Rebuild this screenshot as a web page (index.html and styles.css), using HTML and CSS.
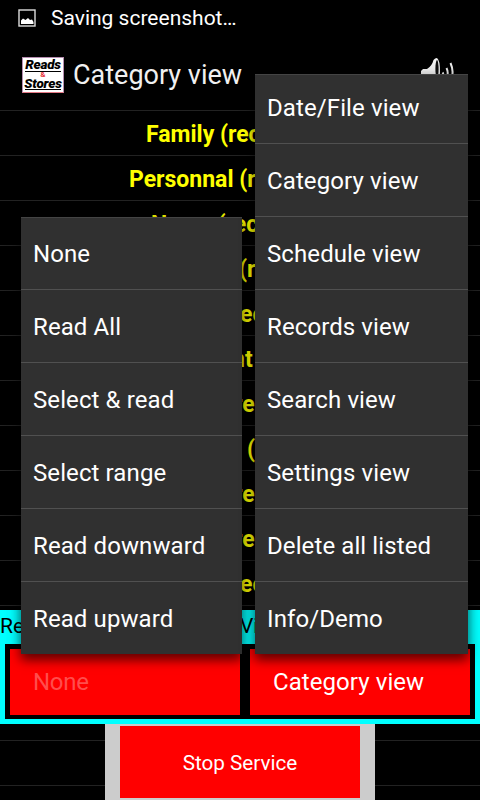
FILE: index.html
```
<!DOCTYPE html>
<html lang="en">
<head>
<meta charset="utf-8">
<title>Category view</title>
<link rel="stylesheet" href="styles.css">
</head>
<body>
<div class="screen">
  <div class="status">
    <svg class="status-icon" width="18" height="18" viewBox="0 0 18 18"><rect x="1" y="1" width="16" height="16" fill="none" stroke="#ddd" stroke-width="1.4"/><path d="M3 15V11.500L5 9.500L7.500 11L10 9L12 11L14 10.500L15.500 13V15Z" fill="#fff"/></svg>
    <span>Saving screenshot…</span>
  </div>
  <header class="bar">
    <div class="logo"><span class="word">Reads</span><span class="amp">&amp;</span><span class="word low">Stores</span></div>
    <h1>Category view</h1>
    <svg class="speaker" width="36" height="32" viewBox="0 0 36 32"><path d="M1 18V14L3 12H7Q12 9 13.500 3Q15 1 17 1Q20 3 20 15Q20 26 16 27L8 20H2Z" fill="#f4f4f4"/><ellipse cx="17" cy="12" rx="1.600" ry="9" fill="#111"/><path d="M22.500 15.500Q24 17 22.500 20M26.500 11Q29 16 26.500 22M30.500 6Q34.500 15 31 25" fill="none" stroke="#eee" stroke-width="2"/></svg>
  </header>
  <ul class="list">
    <li class="r1">Family (rec</li>
    <li class="r2">Personnal (r</li>
    <li class="r3">Name (rec</li>
    <li class="r4">(r</li>
    <li class="r5">ec</li>
    <li class="r6">nt</li>
    <li class="r7">re</li>
    <li class="r8">(</li>
    <li class="r9">re</li>
    <li class="r10">re</li>
    <li class="r11">ec</li>
  </ul>
  <section class="controls">
    <div class="labels"><span>Re</span><span>Vi</span></div>
    <div class="spinners">
      <div class="spinner dim">None</div>
      <div class="spinner">Category view</div>
    </div>
  </section>
  <footer class="foot"><div class="frame"><button class="stop">Stop Service</button></div></footer>
  <ul class="menu left">
    <li>None</li><li>Read All</li><li>Select &amp; read</li><li>Select range</li><li>Read downward</li><li>Read upward</li>
  </ul>
  <ul class="menu right">
    <li>Date/File view</li><li>Category view</li><li>Schedule view</li><li>Records view</li><li>Search view</li><li>Settings view</li><li>Delete all listed</li><li>Info/Demo</li>
  </ul>
</div>
</body>
</html>
```
FILE: styles.css
```
* { box-sizing: border-box; }
body { margin: 0; background: #000; font-family: Roboto, sans-serif; }
ul { list-style: none; margin: 0; padding: 0; }
.screen { position: relative; width: 480px; height: 800px; overflow: hidden; background: #000; }
.status { height: 38px; padding: 0 0 2px 18px; display: flex; align-items: center; gap: 15px; color: #fff; font-size: 21px; }
.bar { height: 72px; display: flex; align-items: center; padding: 1px 24px 0 22px; }
.logo { width: 42px; height: 36px; background: #fff; border: 1px solid #b58cb0; border-bottom-color: #e57884; color: #000; display: flex; flex-direction: column; align-items: center; font-size: 13.5px; line-height: 13px; overflow: hidden; }
.word { font-weight: 900; font-style: italic; width: 36px; height: 14px; border-bottom: 1px solid #000; display: flex; justify-content: center; flex: none; letter-spacing: -.2px; }
.word.low { height: 13px; line-height: 12px; }
.amp { color: #e8323c; font-size: 8px; line-height: 6px; height: 5px; font-weight: 700; flex: none; }
h1 { margin: 0 0 0 9px; font-size: 27px; font-weight: 400; line-height: 32px; color: #f0f0f0; }
.speaker { margin: 0 0 4px auto; }
.list { height: 500px; overflow: hidden; background: repeating-linear-gradient(#222 0 1px, #000 1px 45px); }
.list li { height: 45px; padding-top: 2px; line-height: 45px; font-size: 23px; font-weight: 700; color: #ff0; white-space: nowrap; }
.list .r1 { padding-left: 146px; }
.list .r2 { padding-left: 129px; }
.list .r3 { padding-left: 151px; }
.list .r4 { padding-left: 239px; }
.list .r5 { padding-left: 240px; }
.list .r6 { padding-left: 232px; }
.list .r7 { padding-left: 234px; }
.list .r8 { padding-left: 247px; }
.list .r9 { padding-left: 234px; }
.list .r10 { padding-left: 234px; }
.list .r11 { padding-left: 240px; }
.controls { height: 114px; background: #0ff; padding: 0 5px 5px; }
.labels { height: 34px; line-height: 32px; display: grid; grid-template-columns: 240px 1fr; margin-left: -5px; font-size: 21px; color: #000; }
.spinners { height: 75px; background: #000; padding: 5px; display: grid; grid-template-columns: 230px 220px; gap: 10px; }
.spinner { background: #f00; color: #fff; font-size: 24px; line-height: 66px; padding-left: 23px; letter-spacing: .07px; }
.spinner.dim { color: #ff4d4d; letter-spacing: -.3px; }
.foot { height: 76px; background: repeating-linear-gradient(#000 0 16px, #222 16px 17px, #000 17px 45px); background-size: 100% 45px; display: flex; justify-content: center; }
.frame { width: 270px; background: #ccc; padding: 2px 15px; }
.stop { display: block; width: 240px; height: 72px; border: 0; background: #f00; color: #fff; font: 20.7px Roboto, sans-serif; padding: 2px 0 0; }
.menu { position: absolute; bottom: 146px; background: #303030; color: #fff; font-size: 24px; letter-spacing: .1px; overflow: hidden; display: flex; flex-direction: column; justify-content: flex-end; border-top: 1px solid #444; box-shadow: 0 6px 10px rgba(0,0,0,.55), 0 1px 16px rgba(0,0,0,.22); }
.menu li { flex: none; height: 73px; line-height: 74px; padding-left: 12px; white-space: nowrap; border-bottom: 1px solid #505050; }
.menu li:last-child { height: 72px; border-bottom: 0; }
.left { left: 21px; width: 221px; height: 437px; }
.right { left: 255px; width: 213px; height: 580px; }
```
